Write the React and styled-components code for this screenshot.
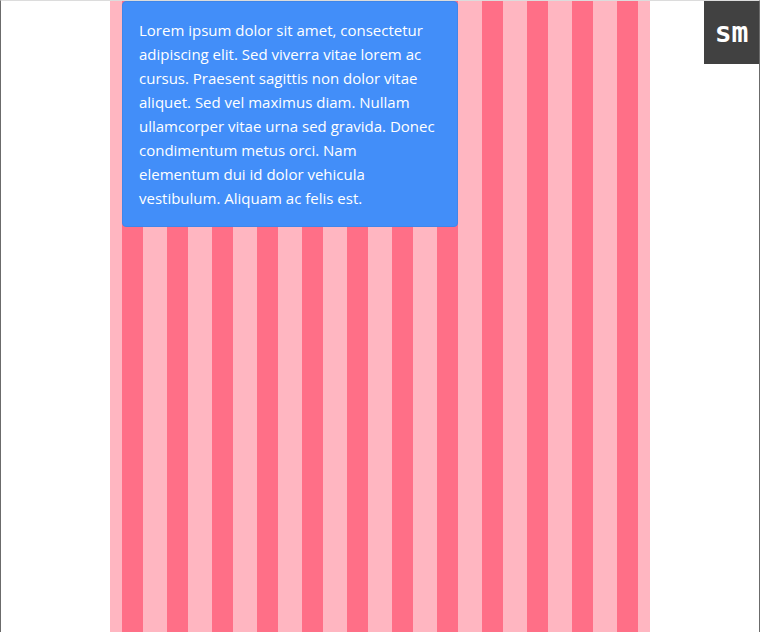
import styled, { createGlobalStyle } from "styled-components";

const GlobalStyle = createGlobalStyle`
  html, body {
    margin: 0;
    padding: 0;
    background: #ffffff;
  }
  * {
    box-sizing: border-box;
  }
`;

const Frame = styled.div`
  min-height: 100vh;
  border-top: 1px solid #dcdcdc;
  border-left: 1px solid #6b6b6b;
  border-right: 1px solid #6b6b6b;
  display: flex;
  justify-content: center;
`;

const Container = styled.div`
  width: 540px;
  padding: 0 12px;
  background: repeating-linear-gradient(
        90deg,
        #ff6f87 0 21px,
        transparent 21px 45px
      )
      content-box,
    #ffb6c1;
`;

const Row = styled.div`
  display: grid;
  grid-template-columns: repeat(12, 21px);
  column-gap: 24px;
`;

const Card = styled.div`
  grid-column: span ${(p) => p.span};
  background: #428ef9;
  border: 1px solid #3f86ea;
  border-radius: 4px;
  padding: 16px;
  color: #ffffff;
  font-family: "Open Sans", "Noto Sans", sans-serif;
  font-size: 15px;
  line-height: 24px;
`;

const Badge = styled.div`
  position: fixed;
  top: 1px;
  right: 1px;
  width: 55px;
  height: 63px;
  background: #414141;
  color: #ffffff;
  display: flex;
  align-items: center;
  justify-content: center;
  font-family: "DejaVu Sans Mono", "Liberation Mono", monospace;
  font-weight: bold;
  font-size: 28px;
`;

const App = () => {
  return (
    <>
      <GlobalStyle />
      <Frame>
        <Container>
          <Row>
            <Card span={8}>
              Lorem ipsum dolor sit amet, consectetur adipiscing elit. Sed
              viverra vitae lorem ac cursus. Praesent sagittis non dolor vitae
              aliquet. Sed vel maximus diam. Nullam ullamcorper vitae urna sed
              gravida. Donec condimentum metus orci. Nam elementum dui id dolor
              vehicula vestibulum. Aliquam ac felis est.
            </Card>
          </Row>
        </Container>
      </Frame>
      <Badge>sm</Badge>
    </>
  );
};

export default App;
